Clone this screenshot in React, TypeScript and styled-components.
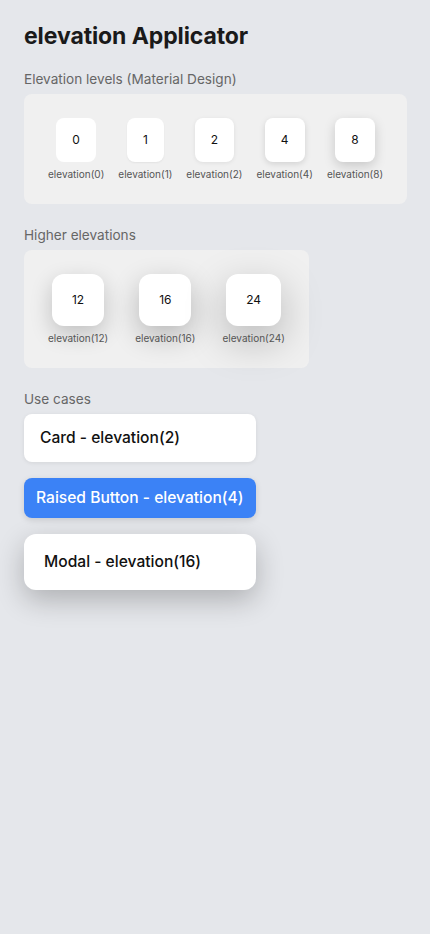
import React from "react";
import styled, { createGlobalStyle } from "styled-components";

const GlobalStyle = createGlobalStyle`
  html, body {
    margin: 0;
    padding: 0;
    background: #e5e7eb;
    font-family: Inter, "Noto Sans", "Liberation Sans", sans-serif;
    -webkit-font-smoothing: antialiased;
  }
`;

const shadows: Record<number, string> = {
  0: "none",
  1: "0 1px 2px rgba(0,0,0,0.06)",
  2: "0 1px 4px rgba(0,0,0,0.08)",
  4: "0 2px 6px rgba(0,0,0,0.13)",
  8: "0 4px 12px rgba(0,0,0,0.17)",
  12: "0 8px 22px rgba(0,0,0,0.2)",
  16: "0 10px 28px rgba(0,0,0,0.24)",
  24: "0 14px 40px rgba(0,0,0,0.25)",
};

const Page = styled.div`
  min-height: 934px;
  box-sizing: border-box;
  padding: 22px 24px 24px;
  display: flex;
  flex-direction: column;
  align-items: flex-start;
`;

const Title = styled.h1`
  margin: 0 0 19px;
  font-size: 23px;
  line-height: 28px;
  font-weight: 700;
  color: #1a1a1a;
  letter-spacing: -0.1px;
`;

const SectionLabel = styled.div`
  font-size: 13.6px;
  line-height: 20px;
  color: #666;
  margin-bottom: 5px;
`;

const Panel = styled.div<{ $gap: number }>`
  display: flex;
  gap: ${(p) => p.$gap}px;
  padding: 24px;
  background: #f0f0f0;
  border-radius: 8px;
  margin-bottom: 21px;
`;

const Item = styled.div`
  display: flex;
  flex-direction: column;
  align-items: center;
  gap: 7px;
`;

const Box = styled.div<{ $large?: boolean }>`
  background: #fff;
  color: #111;
  font-size: 12px;
  line-height: 20px;
  padding: ${(p) => (p.$large ? "16px 20px" : "12px 16px")};
  border-radius: ${(p) => (p.$large ? "12px" : "8px")};
  text-align: center;
`;

const Caption = styled.div`
  font-size: 10px;
  line-height: 11px;
  color: #555;
  white-space: nowrap;
`;

const UseCases = styled.div`
  display: flex;
  flex-direction: column;
  gap: 16px;
`;

const Card = styled.div`
  background: #fff;
  color: #111;
  font-size: 15.6px;
  line-height: 24px;
  font-weight: 500;
  padding: 12px 16px;
  border-radius: 8px;
`;

const RaisedButton = styled.button`
  background: #3b82f6;
  color: #fff;
  border: none;
  font-family: inherit;
  font-size: 15.6px;
  line-height: 24px;
  font-weight: 500;
  padding: 8px 12px;
  border-radius: 8px;
  text-align: left;
`;

const Modal = styled.div`
  background: #fff;
  color: #111;
  font-size: 15.6px;
  line-height: 24px;
  font-weight: 500;
  padding: 16px 20px;
  border-radius: 12px;
`;

const basic = [0, 1, 2, 4, 8];
const higher = [12, 16, 24];

export default function App() {
  return (
    <>
      <GlobalStyle />
      <Page>
        <Title>elevation Applicator</Title>
        <SectionLabel>Elevation levels (Material Design)</SectionLabel>
        <Panel $gap={14}>
          {basic.map((l) => (
            <Item key={l}>
              <Box style={{ boxShadow: shadows[l] }}>{l}</Box>
              <Caption>elevation({l})</Caption>
            </Item>
          ))}
        </Panel>
        <SectionLabel>Higher elevations</SectionLabel>
        <Panel $gap={27}>
          {higher.map((l) => (
            <Item key={l}>
              <Box $large style={{ boxShadow: shadows[l] }}>{l}</Box>
              <Caption>elevation({l})</Caption>
            </Item>
          ))}
        </Panel>
        <SectionLabel>Use cases</SectionLabel>
        <UseCases>
          <Card style={{ boxShadow: shadows[2] }}>Card - elevation(2)</Card>
          <RaisedButton style={{ boxShadow: shadows[4] }}>Raised Button - elevation(4)</RaisedButton>
          <Modal style={{ boxShadow: shadows[16] }}>Modal - elevation(16)</Modal>
        </UseCases>
      </Page>
    </>
  );
}
